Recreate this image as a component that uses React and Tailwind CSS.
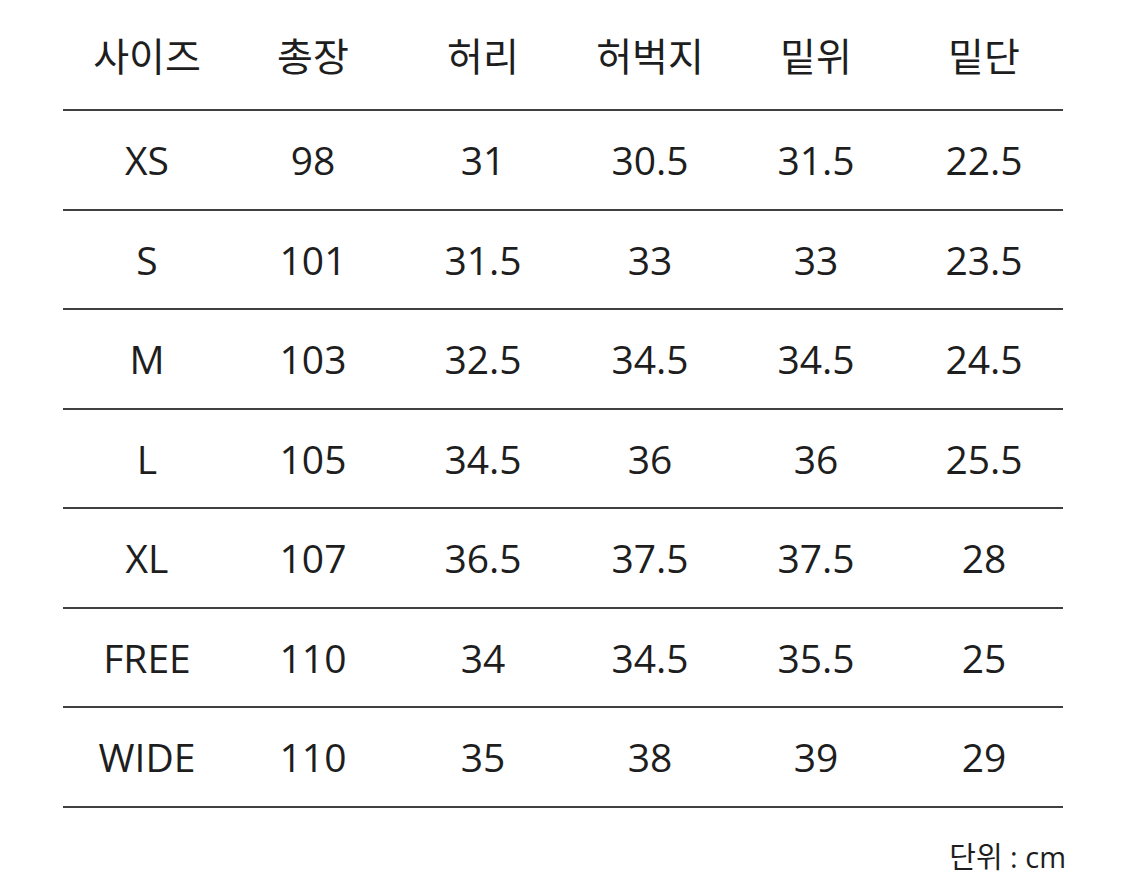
import React from 'react';

const headers = ['사이즈', '총장', '허리', '허벅지', '밑위', '밑단'];

const rows = [
  ['XS', '98', '31', '30.5', '31.5', '22.5'],
  ['S', '101', '31.5', '33', '33', '23.5'],
  ['M', '103', '32.5', '34.5', '34.5', '24.5'],
  ['L', '105', '34.5', '36', '36', '25.5'],
  ['XL', '107', '36.5', '37.5', '37.5', '28'],
  ['FREE', '110', '34', '34.5', '35.5', '25'],
  ['WIDE', '110', '35', '38', '39', '29'],
];

// column widths picked so the text centres line up with the chart
const cols = 'grid grid-cols-[168px_164px_176px_158px_174px_162px]';

const App = () => {
  return (
    <div
      className="w-[1125px] h-[896px] bg-white text-[#1e1e1e] overflow-hidden"
      style={{ fontFamily: '"Open Sans", "Noto Sans CJK KR", sans-serif' }}
    >
      <div className="ml-[63px] w-[1000px]">
        {/* Header */}
        <div className={`${cols} h-[111px] items-center border-b-2 border-[#404040] pt-[2px]`}>
          {headers.map((h) => (
            <div key={h} className="text-center text-[39px] leading-none">
              {h}
            </div>
          ))}
        </div>

        {/* Rows */}
        {rows.map((row) => (
          <div
            key={row[0]}
            className={`${cols} h-[99.5px] items-center border-b-2 border-[#404040]`}
          >
            {row.map((cell, i) => (
              <div key={i} className="text-center text-[39px] leading-none">
                {cell}
              </div>
            ))}
          </div>
        ))}

        {/* Unit note */}
        <div className="text-right text-[29px] leading-none pt-[34px] mr-[-3px]">
          단위 : cm
        </div>
      </div>
    </div>
  );
};

export default App;
